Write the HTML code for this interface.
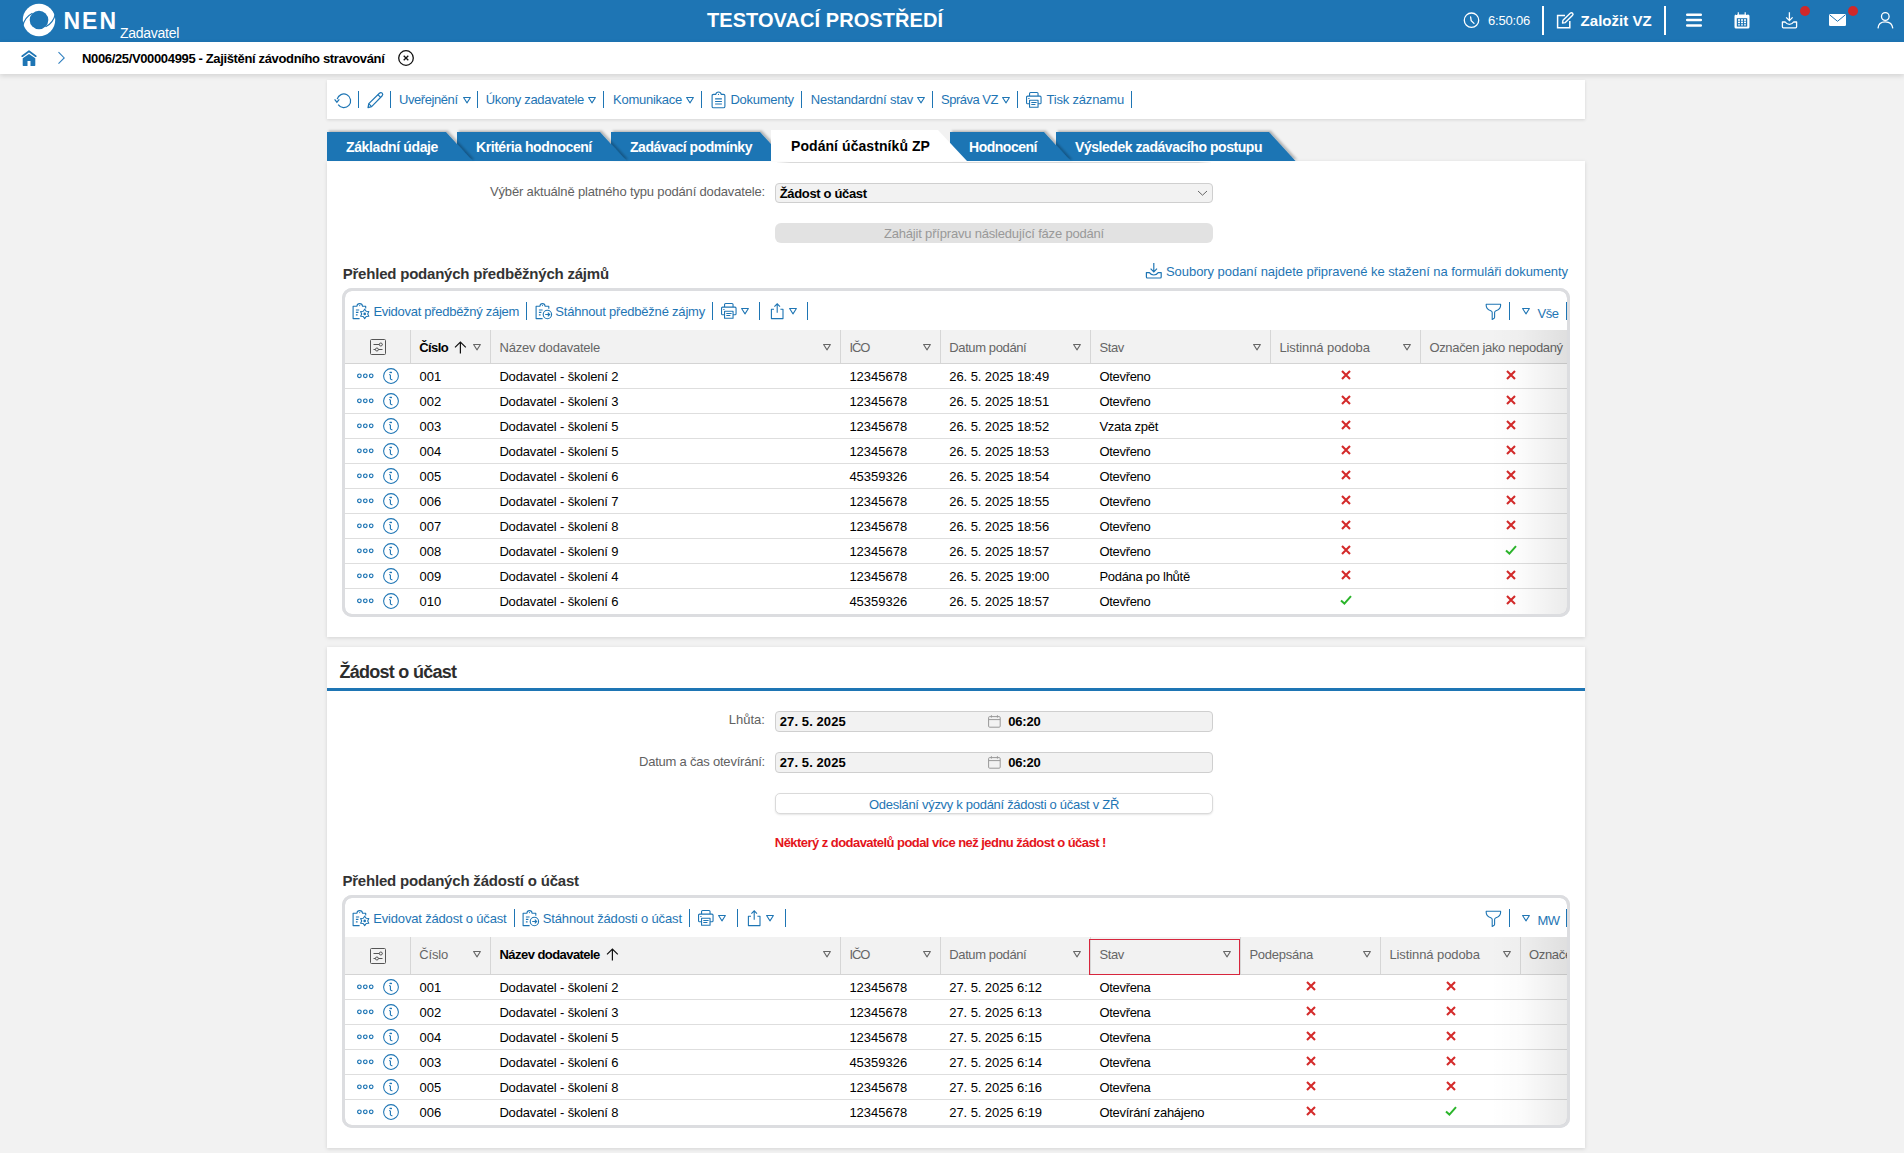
<!DOCTYPE html><html><head><meta charset="utf-8"><style>
html,body{margin:0;padding:0;}
body{width:1904px;height:1153px;overflow:hidden;position:relative;background:#f2f2f2;font-family:"Liberation Sans",sans-serif;}
.a{position:absolute;}
.t{position:absolute;white-space:nowrap;}
svg.a{overflow:visible;}
</style></head><body>
<div class="a" style="left:0px;top:0px;width:1904px;height:42px;background:#1e75b4;"></div>
<svg class="a" style="left:22px;top:3px;" width="34" height="34" viewBox="0 0 34 34">
<circle cx="17" cy="17" r="16.2" fill="#fff"/>
<circle cx="17" cy="17" r="9.3" fill="#1e75b4"/>
<path d="M0.6 23.2 Q2.6 14.2 10.4 10.2" fill="none" stroke="#1e75b4" stroke-width="1.2"/>
<path d="M33.4 10.8 Q31.4 19.8 23.6 23.8" fill="none" stroke="#1e75b4" stroke-width="1.2"/>
<path d="M0.6 23.2 L3.6 26.6 L0 27 Z" fill="#1e75b4"/>
<path d="M33.4 10.8 L30.4 7.4 L34 7 Z" fill="#1e75b4"/>
</svg>
<div class="t" style="letter-spacing:1.979px;left:63.5px;top:9.53px;font-size:23.00px;line-height:23.00px;font-weight:700;color:#fff;">NEN</div>
<div class="t" style="letter-spacing:-0.276px;left:120px;top:25.95px;font-size:14.00px;line-height:14.00px;font-weight:400;color:#fff;">Zadavatel</div>
<div class="t" style="letter-spacing:0.061px;left:707px;top:10.27px;font-size:20.00px;line-height:20.00px;font-weight:700;color:#fff;">TESTOVACÍ PROSTŘEDÍ</div>
<svg class="a" style="left:1463px;top:12px;" width="17" height="17" viewBox="0 0 17 17"><circle cx="8.5" cy="8.2" r="7.2" fill="none" stroke="#fff" stroke-width="1.3"/><path d="M7.6 5 L8.2 8.6 L11 11.4" fill="none" stroke="#fff" stroke-width="1.3" stroke-linecap="round"/></svg>
<div class="t" style="letter-spacing:-0.196px;left:1488px;top:13.70px;font-size:13.00px;line-height:13.00px;font-weight:400;color:#fff;">6:50:06</div>
<div class="a" style="left:1541.8px;top:6px;width:2.4px;height:29px;background:#fff;"></div>
<svg class="a" style="left:1556px;top:12px;" width="18" height="17" viewBox="0 0 18 17"><path d="M9 3.5 H1.6 V15.8 H13.8 V9" fill="none" stroke="#fff" stroke-width="1.5"/><path d="M6.5 11 L7 8.2 L14.2 1.2 Q15.5 0.2 16.6 1.3 Q17.6 2.5 16.4 3.6 L9.3 10.6 Z" fill="none" stroke="#fff" stroke-width="1.4" stroke-linejoin="round"/></svg>
<div class="t" style="letter-spacing:0.016px;left:1580.6px;top:12.90px;font-size:15.00px;line-height:15.00px;font-weight:700;color:#fff;">Založit VZ</div>
<div class="a" style="left:1663.8px;top:6px;width:2.4px;height:29px;background:#fff;"></div>
<svg class="a" style="left:1686px;top:13px;" width="16" height="14" viewBox="0 0 16 14"><path d="M1.2 1.7 H14.8 M1.2 7 H14.8 M1.2 12.4 H14.8" stroke="#fff" stroke-width="2.5" stroke-linecap="round"/></svg>
<svg class="a" style="left:1733px;top:12px;" width="18" height="17" viewBox="0 0 18 17"><rect x="1.5" y="2.4" width="15" height="14" rx="1.5" fill="#fff"/>
<rect x="3.8" y="6.2" width="10.4" height="8.4" fill="#1e75b4"/>
<path d="M5.3 0.3 V3.4 M12.2 0.3 V3.4" stroke="#fff" stroke-width="1.2"/>
<rect x="3" y="0" width="1" height="3" fill="#1e75b4"/><rect x="13.3" y="0" width="1" height="3" fill="#1e75b4"/>
<g fill="#fff"><rect x="5" y="7.2" width="2" height="1.6"/><rect x="8" y="7.2" width="2" height="1.6"/><rect x="11" y="7.2" width="2" height="1.6"/>
<rect x="5" y="9.6" width="2" height="1.6"/><rect x="8" y="9.6" width="2" height="1.6"/><rect x="11" y="9.6" width="2" height="1.6"/>
<rect x="5" y="12" width="2" height="1.6" opacity=".7"/><rect x="8" y="12" width="2" height="1.6" opacity=".7"/><rect x="11" y="12" width="2" height="1.6" opacity=".7"/></g></svg>
<svg class="a" style="left:1781px;top:12px;" width="18" height="17" viewBox="0 0 18 17"><path d="M8.4 0.3 V8.3 M5.2 5.4 L8.4 8.6 L11.6 5.4" fill="none" stroke="#fff" stroke-width="1.3"/>
<path d="M1.4 10 V14.8 Q1.4 15.8 2.4 15.8 H14.6 Q15.6 15.8 15.6 14.8 V10 H12.6 Q11 12.4 8.4 12.4 Q5.8 12.4 4.2 10 Z" fill="none" stroke="#fff" stroke-width="1.3" stroke-linejoin="round"/></svg>
<div class="a" style="left:1800px;top:6px;width:10px;height:10px;border-radius:50%;background:#d0282a;"></div>
<svg class="a" style="left:1829px;top:14px;" width="17" height="12" viewBox="0 0 17 12"><rect x="0" y="0" width="17" height="12" rx="1.2" fill="#fff"/>
<path d="M0.6 0.8 L8.5 7.3 L16.4 0.8" fill="none" stroke="#1e75b4" stroke-width="1"/></svg>
<div class="a" style="left:1848px;top:6px;width:10px;height:10px;border-radius:50%;background:#d0282a;"></div>
<svg class="a" style="left:1877px;top:12px;" width="17" height="17" viewBox="0 0 17 17"><circle cx="8.3" cy="4.5" r="3.8" fill="none" stroke="#fff" stroke-width="1.3"/>
<path d="M1 16.4 Q1.4 9.8 8.3 9.8 Q15.2 9.8 15.8 16.4" fill="none" stroke="#fff" stroke-width="1.3"/></svg>
<div class="a" style="left:0px;top:42px;width:1904px;height:32px;background:#fff;box-shadow:0 2px 5px rgba(0,0,0,0.13);"></div>
<svg class="a" style="left:21px;top:50px;" width="17" height="17" viewBox="0 0 17 17"><path d="M1.2 6.2 L8 1.2 L14.8 6.2" fill="none" stroke="#1e75b4" stroke-width="1.7" stroke-linecap="round" stroke-linejoin="round"/>
<path d="M1.7 8.3 L8 3.9 L14.3 8.3 V15.3 Q14.3 15.9 13.7 15.9 H9.5 V11 H6.5 V15.9 H2.3 Q1.7 15.9 1.7 15.3 Z" fill="#1e75b4"/></svg>
<svg class="a" style="left:57px;top:51px;" width="9" height="14" viewBox="0 0 9 14"><path d="M1.5 1.2 L7.2 6.9 L1.5 12.6" fill="none" stroke="#2f7fbf" stroke-width="1.1"/></svg>
<div class="t" style="letter-spacing:-0.354px;left:82px;top:52.00px;font-size:13.00px;line-height:13.00px;font-weight:700;color:#000;">N006/25/V00004995 - Zajištění závodního stravování</div>
<svg class="a" style="left:397px;top:49px;" width="18" height="18" viewBox="0 0 18 18"><circle cx="9" cy="9" r="7.3" fill="none" stroke="#111" stroke-width="1.3"/><path d="M6.7 6.7 L11.3 11.3 M11.3 6.7 L6.7 11.3" stroke="#111" stroke-width="1.3"/></svg>
<div class="a" style="left:327px;top:80px;width:1258px;height:39px;background:#fff;box-shadow:0 1px 3px rgba(0,0,0,0.12);"></div>
<svg class="a" style="left:334px;top:93.5px;" width="18" height="16" viewBox="0 0 18 16"><path d="M4.2 10.6 A6.8 6.8 0 1 0 3.2 5.2" fill="none" stroke="#1e75b4" stroke-width="1.2"/>
<path d="M0.6 5.3 L2.9 8.2 L5.3 5.4" fill="none" stroke="#1e75b4" stroke-width="1.2"/></svg>
<div class="a" style="left:358px;top:91px;width:1px;height:17px;background:#1e75b4;"></div>
<svg class="a" style="left:366px;top:91px;" width="18" height="18" viewBox="0 0 18 18"><path d="M2 16.6 L2.8 12.6 L13.4 2.2 Q14.9 0.9 16.2 2.2 Q17.4 3.6 16 5 L5.6 15.6 Z" fill="none" stroke="#1e75b4" stroke-width="1.2" stroke-linejoin="round"/>
<path d="M2.8 12.6 L5.6 15.6 M11.9 3.7 L14.6 6.4" fill="none" stroke="#1e75b4" stroke-width="1.2"/></svg>
<div class="a" style="left:390px;top:91px;width:1px;height:17px;background:#1e75b4;"></div>
<div class="t" style="letter-spacing:-0.427px;left:399px;top:92.75px;font-size:13.00px;line-height:13.00px;font-weight:400;color:#1e75b4;">Uveřejnění</div>
<svg class="a" style="left:462.5px;top:97px;" width="8" height="7" viewBox="0 0 8 7"><path d="M0.6 0.5 H7.4 L4 5.9 Z" fill="none" stroke="#1e75b4" stroke-width="1.05" stroke-linejoin="round"/></svg>
<div class="a" style="left:477px;top:91px;width:1px;height:17px;background:#1e75b4;"></div>
<div class="t" style="letter-spacing:-0.315px;left:485.7px;top:92.75px;font-size:13.00px;line-height:13.00px;font-weight:400;color:#1e75b4;">Úkony zadavatele</div>
<svg class="a" style="left:588px;top:97px;" width="8" height="7" viewBox="0 0 8 7"><path d="M0.6 0.5 H7.4 L4 5.9 Z" fill="none" stroke="#1e75b4" stroke-width="1.05" stroke-linejoin="round"/></svg>
<div class="a" style="left:603px;top:91px;width:1px;height:17px;background:#1e75b4;"></div>
<div class="t" style="letter-spacing:-0.255px;left:613px;top:92.75px;font-size:13.00px;line-height:13.00px;font-weight:400;color:#1e75b4;">Komunikace</div>
<svg class="a" style="left:686.2px;top:97px;" width="8" height="7" viewBox="0 0 8 7"><path d="M0.6 0.5 H7.4 L4 5.9 Z" fill="none" stroke="#1e75b4" stroke-width="1.05" stroke-linejoin="round"/></svg>
<div class="a" style="left:701px;top:91px;width:1px;height:17px;background:#1e75b4;"></div>
<svg class="a" style="left:711px;top:91px;" width="15" height="18" viewBox="0 0 15 18"><path d="M4.8 3.4 H2.5 Q1.1 3.4 1.1 4.8 V15.4 Q1.1 16.8 2.5 16.8 H12.5 Q13.9 16.8 13.9 15.4 V4.8 Q13.9 3.4 12.5 3.4 H10.2 Q9.8 1 7.5 1 Q5.2 1 4.8 3.4 Z" fill="none" stroke="#1e75b4" stroke-width="1.1" stroke-linejoin="round"/>
<circle cx="7.5" cy="3.4" r="0.6" fill="#1e75b4"/>
<path d="M4.1 7.9 H10.9 M4.1 10.5 H10.9 M4.1 13 H10.9" stroke="#1e75b4" stroke-width="1.1"/></svg>
<div class="t" style="letter-spacing:-0.278px;left:730.5px;top:92.75px;font-size:13.00px;line-height:13.00px;font-weight:400;color:#1e75b4;">Dokumenty</div>
<div class="a" style="left:801px;top:91px;width:1px;height:17px;background:#1e75b4;"></div>
<div class="t" style="letter-spacing:-0.189px;left:810.7px;top:92.75px;font-size:13.00px;line-height:13.00px;font-weight:400;color:#1e75b4;">Nestandardní stav</div>
<svg class="a" style="left:917px;top:97px;" width="8" height="7" viewBox="0 0 8 7"><path d="M0.6 0.5 H7.4 L4 5.9 Z" fill="none" stroke="#1e75b4" stroke-width="1.05" stroke-linejoin="round"/></svg>
<div class="a" style="left:932px;top:91px;width:1px;height:17px;background:#1e75b4;"></div>
<div class="t" style="letter-spacing:-0.502px;left:941px;top:92.75px;font-size:13.00px;line-height:13.00px;font-weight:400;color:#1e75b4;">Správa VZ</div>
<svg class="a" style="left:1002.2px;top:97px;" width="8" height="7" viewBox="0 0 8 7"><path d="M0.6 0.5 H7.4 L4 5.9 Z" fill="none" stroke="#1e75b4" stroke-width="1.05" stroke-linejoin="round"/></svg>
<div class="a" style="left:1017px;top:91px;width:1px;height:17px;background:#1e75b4;"></div>
<svg class="a" style="left:1026.2px;top:92px;" width="16" height="16" viewBox="0 0 16 16"><path d="M3.55 4.1 V1.6 Q3.55 0.55 4.6 0.55 H11 Q12.05 0.55 12.05 1.6 V4.1" fill="none" stroke="#1e75b4" stroke-width="1.1"/>
<path d="M3.55 11.8 H1.6 Q0.55 11.8 0.55 10.75 V5.15 Q0.55 4.1 1.6 4.1 H14 Q15.05 4.1 15.05 5.15 V10.75 Q15.05 11.8 14 11.8 H12.05" fill="none" stroke="#1e75b4" stroke-width="1.1"/>
<path d="M3.55 15.25 V8.3 H12.05 V15.25 Z" fill="none" stroke="#1e75b4" stroke-width="1.1" stroke-linejoin="round"/>
<path d="M5.3 10.4 H10.6 M5.3 12.5 H9.4 M2.3 6.4 H3.5" stroke="#1e75b4" stroke-width="1.05"/></svg>
<div class="t" style="letter-spacing:-0.177px;left:1046.4px;top:92.75px;font-size:13.00px;line-height:13.00px;font-weight:400;color:#1e75b4;">Tisk záznamu</div>
<div class="a" style="left:1131px;top:91px;width:1px;height:17px;background:#1e75b4;"></div>
<svg class="a" style="left:327px;top:132px;z-index:60;" width="151.5" height="29" viewBox="0 0 151.5 29"><defs><filter id="f60" x="-10%" y="-30%" width="130%" height="160%"><feDropShadow dx="1.8" dy="-1.4" stdDeviation="1.0" flood-color="#000" flood-opacity="0.26"/></filter></defs>
<polygon points="0,0 119,0 145.5,29 0,29" fill="#1e75b4" filter="url(#f60)"/></svg>
<div class="t" style="letter-spacing:-0.375px;left:346px;top:139.65px;font-size:14.00px;line-height:14.00px;font-weight:700;color:#fff;z-index:61;">Základní údaje</div>
<svg class="a" style="left:457px;top:132px;z-index:50;" width="175.5" height="29" viewBox="0 0 175.5 29"><defs><filter id="f50" x="-10%" y="-30%" width="130%" height="160%"><feDropShadow dx="1.8" dy="-1.4" stdDeviation="1.0" flood-color="#000" flood-opacity="0.26"/></filter></defs>
<polygon points="0,0 143,0 169.5,29 0,29" fill="#1e75b4" filter="url(#f50)"/></svg>
<div class="t" style="letter-spacing:-0.438px;left:476px;top:139.65px;font-size:14.00px;line-height:14.00px;font-weight:700;color:#fff;z-index:51;">Kritéria hodnocení</div>
<svg class="a" style="left:611px;top:132px;z-index:40;" width="181.5" height="29" viewBox="0 0 181.5 29"><defs><filter id="f40" x="-10%" y="-30%" width="130%" height="160%"><feDropShadow dx="1.8" dy="-1.4" stdDeviation="1.0" flood-color="#000" flood-opacity="0.26"/></filter></defs>
<polygon points="0,0 149,0 175.5,29 0,29" fill="#1e75b4" filter="url(#f40)"/></svg>
<div class="t" style="letter-spacing:-0.467px;left:630px;top:139.65px;font-size:14.00px;line-height:14.00px;font-weight:700;color:#fff;z-index:41;">Zadávací podmínky</div>
<svg class="a" style="left:771px;top:130px;z-index:70;" width="200" height="31" viewBox="0 0 200 31"><polygon points="0,0 167,0 196,31 0,31" fill="#fff"/></svg>
<div class="t" style="letter-spacing:0.068px;left:791px;top:138.95px;font-size:14.00px;line-height:14.00px;font-weight:700;color:#000;z-index:71;">Podání účastníků ZP</div>
<svg class="a" style="left:950px;top:132px;z-index:30;" width="126.5" height="29" viewBox="0 0 126.5 29"><defs><filter id="f30" x="-10%" y="-30%" width="130%" height="160%"><feDropShadow dx="1.8" dy="-1.4" stdDeviation="1.0" flood-color="#000" flood-opacity="0.26"/></filter></defs>
<polygon points="0,0 94,0 120.5,29 0,29" fill="#1e75b4" filter="url(#f30)"/></svg>
<div class="t" style="letter-spacing:-0.483px;left:969px;top:139.65px;font-size:14.00px;line-height:14.00px;font-weight:700;color:#fff;z-index:31;">Hodnocení</div>
<svg class="a" style="left:1056px;top:132px;z-index:20;" width="245.5" height="29" viewBox="0 0 245.5 29"><defs><filter id="f20" x="-10%" y="-30%" width="130%" height="160%"><feDropShadow dx="1.8" dy="-1.4" stdDeviation="1.0" flood-color="#000" flood-opacity="0.26"/></filter></defs>
<polygon points="0,0 213,0 239.5,29 0,29" fill="#1e75b4" filter="url(#f20)"/></svg>
<div class="t" style="letter-spacing:-0.451px;left:1075px;top:139.65px;font-size:14.00px;line-height:14.00px;font-weight:700;color:#fff;z-index:21;">Výsledek zadávacího postupu</div>
<div class="a" style="left:327px;top:161px;width:1258px;height:476px;background:#fff;box-shadow:0 1px 4px rgba(0,0,0,0.13);"></div>
<div class="a" style="left:777px;top:162px;width:434px;height:1px;background:linear-gradient(to right,rgba(0,0,0,0.02),rgba(0,0,0,0.15) 3%,rgba(0,0,0,0.15) 97%,rgba(0,0,0,0.02));"></div>
<div class="t" style="letter-spacing:-0.162px;right:1139px;top:185.40px;font-size:13.00px;line-height:13.00px;font-weight:400;color:#616161;">Výběr aktuálně platného typu podání dodavatele:</div>
<div class="a" style="left:775px;top:183px;width:438px;height:20px;background:#f2f2f2;border:1px solid #cfcfcf;border-radius:4px;box-sizing:border-box;"></div>
<div class="t" style="letter-spacing:-0.339px;left:779.7px;top:186.60px;font-size:13.00px;line-height:13.00px;font-weight:700;color:#000;">Žádost o účast</div>
<svg class="a" style="left:1197px;top:190px;" width="11" height="7" viewBox="0 0 11 7"><path d="M1 1 L5.5 5.2 L10 1" fill="none" stroke="#666" stroke-width="1"/></svg>
<div class="a" style="left:775px;top:223px;width:438px;height:20px;background:#e2e2e2;border-radius:6px;"></div>
<div class="t" style="letter-spacing:-0.191px;left:994px;transform:translateX(-50%);top:227.20px;font-size:13.00px;line-height:13.00px;font-weight:400;color:#999;">Zahájit přípravu následující fáze podání</div>
<div class="t" style="letter-spacing:-0.212px;left:342.7px;top:265.70px;font-size:15.00px;line-height:15.00px;font-weight:700;color:#333;">Přehled podaných předběžných zájmů</div>
<svg class="a" style="left:1145px;top:262px;" width="18" height="17" viewBox="0 0 18 17"><path d="M8.8 1 V9.6 M5.6 6.6 L8.8 9.8 L12 6.6" fill="none" stroke="#1e75b4" stroke-width="1.2"/>
<path d="M1.4 10.6 V15 Q1.4 16 2.4 16 H15.2 Q16.2 16 16.2 15 V10.6 H13.2 Q11.6 13 8.8 13 Q6 13 4.4 10.6 Z" fill="none" stroke="#1e75b4" stroke-width="1.2" stroke-linejoin="round"/></svg>
<div class="t" style="letter-spacing:-0.051px;left:1166px;top:265.20px;font-size:13.00px;line-height:13.00px;font-weight:400;color:#1e75b4;">Soubory podaní najdete připravené ke stažení na formuláři dokumenty</div>
<div class="a" style="left:342px;top:288px;width:1228px;height:329px;border:3px solid #dcdde0;border-radius:10px;box-sizing:border-box;background:#fff;"></div>
<div class="a" style="left:0;top:0;width:1567px;height:1153px;overflow:hidden;">
<svg class="a" style="left:352px;top:303px;" width="18" height="17" viewBox="0 0 18 17"><path d="M7.6 15.6 H1.1 V3.2 H4.9 Q5.1 0.6 7.7 0.6 Q10.3 0.6 10.5 3.2 H13.7 V5.6" fill="none" stroke="#1e75b4" stroke-width="1.1" stroke-linejoin="round"/>
<path d="M3.9 7 H7.2 M3.9 9.4 H6.4 M3.9 11.9 H5.6" stroke="#1e75b4" stroke-width="1.2"/>
<circle cx="7.7" cy="2.6" r="0.6" fill="#1e75b4"/>
<polygon points="12.70,6.20 11.20,8.30 8.63,8.55 9.70,10.90 8.63,13.25 11.20,13.50 12.70,15.60 14.20,13.50 16.77,13.25 15.70,10.90 16.77,8.55 14.20,8.30" fill="#fff" stroke="#1e75b4" stroke-width="1.1" stroke-linejoin="round"/>
<circle cx="12.7" cy="10.9" r="1.3" fill="#1e75b4"/></svg>
<div class="t" style="letter-spacing:-0.283px;left:373.4px;top:305.00px;font-size:13.00px;line-height:13.00px;font-weight:400;color:#1e75b4;">Evidovat předběžný zájem</div>
<div class="a" style="left:526px;top:302px;width:1px;height:17.5px;background:#1e75b4;"></div>
<svg class="a" style="left:534.5px;top:303px;" width="18" height="17" viewBox="0 0 18 17"><path d="M7.6 15.6 H1.1 V3.2 H4.9 Q5.1 0.6 7.5 0.6 Q9.9 0.6 10.1 3.2 H13.8 V5.8" fill="none" stroke="#1e75b4" stroke-width="1.1" stroke-linejoin="round"/>
<path d="M3.9 7 H7.6 M3.9 9.4 H6.4 M3.9 11.9 H5.6" stroke="#1e75b4" stroke-width="1.2"/>
<circle cx="7.5" cy="2.6" r="0.6" fill="#1e75b4"/>
<circle cx="12.4" cy="11.5" r="4.2" fill="#fff" stroke="#1e75b4" stroke-width="1.1"/>
<path d="M10.2 11.5 H14.6 M12.8 9.7 L14.7 11.5 L12.8 13.3" fill="none" stroke="#1e75b4" stroke-width="1.1"/></svg>
<div class="t" style="letter-spacing:-0.207px;left:555.3px;top:305.00px;font-size:13.00px;line-height:13.00px;font-weight:400;color:#1e75b4;">Stáhnout předběžné zájmy</div>
<div class="a" style="left:712px;top:302px;width:1px;height:17.5px;background:#1e75b4;"></div>
<svg class="a" style="left:721.2px;top:303.1px;" width="16" height="16" viewBox="0 0 16 16"><path d="M3.55 4.1 V1.6 Q3.55 0.55 4.6 0.55 H11 Q12.05 0.55 12.05 1.6 V4.1" fill="none" stroke="#1e75b4" stroke-width="1.1"/>
<path d="M3.55 11.8 H1.6 Q0.55 11.8 0.55 10.75 V5.15 Q0.55 4.1 1.6 4.1 H14 Q15.05 4.1 15.05 5.15 V10.75 Q15.05 11.8 14 11.8 H12.05" fill="none" stroke="#1e75b4" stroke-width="1.1"/>
<path d="M3.55 15.25 V8.3 H12.05 V15.25 Z" fill="none" stroke="#1e75b4" stroke-width="1.1" stroke-linejoin="round"/>
<path d="M5.3 10.4 H10.6 M5.3 12.5 H9.4 M2.3 6.4 H3.5" stroke="#1e75b4" stroke-width="1.05"/></svg>
<svg class="a" style="left:741.4px;top:308px;" width="8" height="7" viewBox="0 0 8 7"><path d="M0.6 0.5 H7.4 L4 5.9 Z" fill="none" stroke="#1e75b4" stroke-width="1.05" stroke-linejoin="round"/></svg>
<div class="a" style="left:759px;top:302px;width:1px;height:17.5px;background:#1e75b4;"></div>
<svg class="a" style="left:769.8px;top:303px;" width="15" height="17" viewBox="0 0 15 17"><path d="M4 6.2 H1.4 V15.6 H13 V6.2 H10.4" fill="none" stroke="#1e75b4" stroke-width="1.1" stroke-linejoin="round"/>
<path d="M7.2 0.8 V9.8 M4.4 3.6 L7.2 0.8 L10 3.6" fill="none" stroke="#1e75b4" stroke-width="1.1"/></svg>
<svg class="a" style="left:788.5px;top:308px;" width="8" height="7" viewBox="0 0 8 7"><path d="M0.6 0.5 H7.4 L4 5.9 Z" fill="none" stroke="#1e75b4" stroke-width="1.05" stroke-linejoin="round"/></svg>
<div class="a" style="left:807px;top:302px;width:1px;height:17.5px;background:#1e75b4;"></div>
<svg class="a" style="left:1485px;top:303px;" width="17" height="17" viewBox="0 0 17 17"><path d="M1.2 1.2 H15.6 V2.4 Q15.6 6 11 7.8 Q9.6 8.4 9.6 9.6 V14.2 Q9.6 15 8.8 15.6 L7.2 16.4 V9.6 Q7.2 8.4 5.8 7.8 Q1.2 6 1.2 2.4 Z" fill="none" stroke="#1e75b4" stroke-width="1.1" stroke-linejoin="round"/></svg>
<div class="a" style="left:1509px;top:302px;width:1px;height:17.5px;background:#1e75b4;"></div>
<svg class="a" style="left:1521.8px;top:308px;" width="8" height="7" viewBox="0 0 8 7"><path d="M0.6 0.5 H7.4 L4 5.9 Z" fill="none" stroke="#1e75b4" stroke-width="1.05" stroke-linejoin="round"/></svg>
<div class="t" style="letter-spacing:-0.469px;left:1537.5px;top:307.00px;font-size:13.00px;line-height:13.00px;font-weight:400;color:#1e75b4;">Vše</div>
<div class="a" style="left:1566px;top:302px;width:1px;height:17.5px;background:#1e75b4;"></div>
<div class="a" style="left:345px;top:330px;width:1222px;height:33px;background:#f2f2f2;"></div>
<div class="a" style="left:345px;top:363px;width:1222px;height:1px;background:#d4d4d4;"></div>
<svg class="a" style="left:370px;top:339px;" width="17" height="17" viewBox="0 0 17 17"><rect x="0.5" y="0.5" width="15" height="15" rx="1" fill="none" stroke="#555" stroke-width="1"/>
<path d="M3.5 5.5 H12.5 M3.5 10.5 H12.5" stroke="#555" stroke-width="1"/>
<circle cx="10.8" cy="5.5" r="1.5" fill="#f2f2f2" stroke="#555" stroke-width="1"/>
<circle cx="6.9" cy="10.5" r="1.5" fill="#f2f2f2" stroke="#555" stroke-width="1"/></svg>
<div class="a" style="left:410px;top:330px;width:1px;height:33px;background:#d6d6d6;"></div>
<div class="a" style="left:490px;top:330px;width:1px;height:33px;background:#d6d6d6;"></div>
<div class="a" style="left:840px;top:330px;width:1px;height:33px;background:#d6d6d6;"></div>
<div class="a" style="left:940px;top:330px;width:1px;height:33px;background:#d6d6d6;"></div>
<div class="a" style="left:1090px;top:330px;width:1px;height:33px;background:#d6d6d6;"></div>
<div class="a" style="left:1270px;top:330px;width:1px;height:33px;background:#d6d6d6;"></div>
<div class="a" style="left:1420px;top:330px;width:1px;height:33px;background:#d6d6d6;"></div>
<div class="t" style="letter-spacing:-0.619px;left:419.3px;top:340.80px;font-size:13.00px;line-height:13.00px;font-weight:700;color:#000;">Číslo</div>
<svg class="a" style="left:453.5px;top:341px;" width="13" height="13" viewBox="0 0 13 13"><path d="M6.4 12.4 V1.2 M1 6.4 L6.4 1 L11.8 6.4" fill="none" stroke="#111" stroke-width="1.2"/></svg>
<svg class="a" style="left:473.2px;top:344px;" width="8" height="7" viewBox="0 0 8 7"><path d="M0.6 0.5 H7.4 L4 5.9 Z" fill="none" stroke="#666" stroke-width="1.05" stroke-linejoin="round"/></svg>
<div class="t" style="letter-spacing:-0.224px;left:499.5px;top:340.80px;font-size:13.00px;line-height:13.00px;font-weight:400;color:#666;">Název dodavatele</div>
<svg class="a" style="left:823.3px;top:344px;" width="8" height="7" viewBox="0 0 8 7"><path d="M0.6 0.5 H7.4 L4 5.9 Z" fill="none" stroke="#666" stroke-width="1.05" stroke-linejoin="round"/></svg>
<div class="t" style="letter-spacing:-1.042px;left:849.4px;top:340.80px;font-size:13.00px;line-height:13.00px;font-weight:400;color:#666;">IČO</div>
<svg class="a" style="left:923.4px;top:344px;" width="8" height="7" viewBox="0 0 8 7"><path d="M0.6 0.5 H7.4 L4 5.9 Z" fill="none" stroke="#666" stroke-width="1.05" stroke-linejoin="round"/></svg>
<div class="t" style="letter-spacing:-0.389px;left:949.3px;top:340.80px;font-size:13.00px;line-height:13.00px;font-weight:400;color:#666;">Datum podání</div>
<svg class="a" style="left:1073.4px;top:344px;" width="8" height="7" viewBox="0 0 8 7"><path d="M0.6 0.5 H7.4 L4 5.9 Z" fill="none" stroke="#666" stroke-width="1.05" stroke-linejoin="round"/></svg>
<div class="t" style="letter-spacing:-0.379px;left:1099.4px;top:340.80px;font-size:13.00px;line-height:13.00px;font-weight:400;color:#666;">Stav</div>
<svg class="a" style="left:1253.4px;top:344px;" width="8" height="7" viewBox="0 0 8 7"><path d="M0.6 0.5 H7.4 L4 5.9 Z" fill="none" stroke="#666" stroke-width="1.05" stroke-linejoin="round"/></svg>
<div class="t" style="letter-spacing:-0.087px;left:1279.4px;top:340.80px;font-size:13.00px;line-height:13.00px;font-weight:400;color:#666;">Listinná podoba</div>
<svg class="a" style="left:1403.2px;top:344px;" width="8" height="7" viewBox="0 0 8 7"><path d="M0.6 0.5 H7.4 L4 5.9 Z" fill="none" stroke="#666" stroke-width="1.05" stroke-linejoin="round"/></svg>
<div class="t" style="letter-spacing:-0.325px;left:1429.4px;top:340.80px;font-size:13.00px;line-height:13.00px;font-weight:400;color:#666;">Označen jako nepodaný</div>
<svg class="a" style="left:356.5px;top:373.2px;" width="17" height="6" viewBox="0 0 17 6"><g fill="none" stroke="#1e75b4" stroke-width="1.2"><circle cx="2.4" cy="2.8" r="1.8"/><circle cx="8.3" cy="2.8" r="1.8"/><circle cx="14.2" cy="2.8" r="1.8"/></g></svg>
<svg class="a" style="left:383px;top:368px;" width="17" height="17" viewBox="0 0 17 17"><circle cx="8" cy="8" r="7.4" fill="none" stroke="#1e75b4" stroke-width="1.05"/>
<path d="M6.6 6.6 L7.4 7.2 V10.6 Q7.6 11.6 9 11.8" fill="none" stroke="#1e75b4" stroke-width="1.1" stroke-linecap="round" stroke-linejoin="round"/>
<path d="M7 4.3 L8.4 4.5" stroke="#1e75b4" stroke-width="1.3" stroke-linecap="round"/></svg>
<div class="t" style="letter-spacing:0.000px;left:419.5px;top:369.80px;font-size:13.00px;line-height:13.00px;font-weight:400;color:#000;">001</div>
<div class="t" style="letter-spacing:-0.154px;left:499.4px;top:369.80px;font-size:13.00px;line-height:13.00px;font-weight:400;color:#000;">Dodavatel - školení 2</div>
<div class="t" style="letter-spacing:-0.005px;left:849.4px;top:369.80px;font-size:13.00px;line-height:13.00px;font-weight:400;color:#000;">12345678</div>
<div class="t" style="letter-spacing:-0.083px;left:949.3px;top:369.80px;font-size:13.00px;line-height:13.00px;font-weight:400;color:#000;">26. 5. 2025 18:49</div>
<div class="t" style="letter-spacing:-0.301px;left:1099.4px;top:369.80px;font-size:13.00px;line-height:13.00px;font-weight:400;color:#000;">Otevřeno</div>
<svg class="a" style="left:1340.5px;top:369.5px;" width="10" height="10" viewBox="0 0 10 10"><path d="M1 1 L9 9 M9 1 L1 9" stroke="#d42a2a" stroke-width="2.1"/></svg>
<svg class="a" style="left:1506.3px;top:369.5px;" width="10" height="10" viewBox="0 0 10 10"><path d="M1 1 L9 9 M9 1 L1 9" stroke="#d42a2a" stroke-width="2.1"/></svg>
<div class="a" style="left:345px;top:388px;width:1222px;height:1px;background:#dedede;"></div>
<svg class="a" style="left:356.5px;top:398.2px;" width="17" height="6" viewBox="0 0 17 6"><g fill="none" stroke="#1e75b4" stroke-width="1.2"><circle cx="2.4" cy="2.8" r="1.8"/><circle cx="8.3" cy="2.8" r="1.8"/><circle cx="14.2" cy="2.8" r="1.8"/></g></svg>
<svg class="a" style="left:383px;top:393px;" width="17" height="17" viewBox="0 0 17 17"><circle cx="8" cy="8" r="7.4" fill="none" stroke="#1e75b4" stroke-width="1.05"/>
<path d="M6.6 6.6 L7.4 7.2 V10.6 Q7.6 11.6 9 11.8" fill="none" stroke="#1e75b4" stroke-width="1.1" stroke-linecap="round" stroke-linejoin="round"/>
<path d="M7 4.3 L8.4 4.5" stroke="#1e75b4" stroke-width="1.3" stroke-linecap="round"/></svg>
<div class="t" style="letter-spacing:0.000px;left:419.5px;top:394.80px;font-size:13.00px;line-height:13.00px;font-weight:400;color:#000;">002</div>
<div class="t" style="letter-spacing:-0.154px;left:499.4px;top:394.80px;font-size:13.00px;line-height:13.00px;font-weight:400;color:#000;">Dodavatel - školení 3</div>
<div class="t" style="letter-spacing:-0.005px;left:849.4px;top:394.80px;font-size:13.00px;line-height:13.00px;font-weight:400;color:#000;">12345678</div>
<div class="t" style="letter-spacing:-0.083px;left:949.3px;top:394.80px;font-size:13.00px;line-height:13.00px;font-weight:400;color:#000;">26. 5. 2025 18:51</div>
<div class="t" style="letter-spacing:-0.301px;left:1099.4px;top:394.80px;font-size:13.00px;line-height:13.00px;font-weight:400;color:#000;">Otevřeno</div>
<svg class="a" style="left:1340.5px;top:394.5px;" width="10" height="10" viewBox="0 0 10 10"><path d="M1 1 L9 9 M9 1 L1 9" stroke="#d42a2a" stroke-width="2.1"/></svg>
<svg class="a" style="left:1506.3px;top:394.5px;" width="10" height="10" viewBox="0 0 10 10"><path d="M1 1 L9 9 M9 1 L1 9" stroke="#d42a2a" stroke-width="2.1"/></svg>
<div class="a" style="left:345px;top:413px;width:1222px;height:1px;background:#dedede;"></div>
<svg class="a" style="left:356.5px;top:423.2px;" width="17" height="6" viewBox="0 0 17 6"><g fill="none" stroke="#1e75b4" stroke-width="1.2"><circle cx="2.4" cy="2.8" r="1.8"/><circle cx="8.3" cy="2.8" r="1.8"/><circle cx="14.2" cy="2.8" r="1.8"/></g></svg>
<svg class="a" style="left:383px;top:418px;" width="17" height="17" viewBox="0 0 17 17"><circle cx="8" cy="8" r="7.4" fill="none" stroke="#1e75b4" stroke-width="1.05"/>
<path d="M6.6 6.6 L7.4 7.2 V10.6 Q7.6 11.6 9 11.8" fill="none" stroke="#1e75b4" stroke-width="1.1" stroke-linecap="round" stroke-linejoin="round"/>
<path d="M7 4.3 L8.4 4.5" stroke="#1e75b4" stroke-width="1.3" stroke-linecap="round"/></svg>
<div class="t" style="letter-spacing:0.000px;left:419.5px;top:419.80px;font-size:13.00px;line-height:13.00px;font-weight:400;color:#000;">003</div>
<div class="t" style="letter-spacing:-0.154px;left:499.4px;top:419.80px;font-size:13.00px;line-height:13.00px;font-weight:400;color:#000;">Dodavatel - školení 5</div>
<div class="t" style="letter-spacing:-0.005px;left:849.4px;top:419.80px;font-size:13.00px;line-height:13.00px;font-weight:400;color:#000;">12345678</div>
<div class="t" style="letter-spacing:-0.083px;left:949.3px;top:419.80px;font-size:13.00px;line-height:13.00px;font-weight:400;color:#000;">26. 5. 2025 18:52</div>
<div class="t" style="letter-spacing:-0.276px;left:1099.4px;top:419.80px;font-size:13.00px;line-height:13.00px;font-weight:400;color:#000;">Vzata zpět</div>
<svg class="a" style="left:1340.5px;top:419.5px;" width="10" height="10" viewBox="0 0 10 10"><path d="M1 1 L9 9 M9 1 L1 9" stroke="#d42a2a" stroke-width="2.1"/></svg>
<svg class="a" style="left:1506.3px;top:419.5px;" width="10" height="10" viewBox="0 0 10 10"><path d="M1 1 L9 9 M9 1 L1 9" stroke="#d42a2a" stroke-width="2.1"/></svg>
<div class="a" style="left:345px;top:438px;width:1222px;height:1px;background:#dedede;"></div>
<svg class="a" style="left:356.5px;top:448.2px;" width="17" height="6" viewBox="0 0 17 6"><g fill="none" stroke="#1e75b4" stroke-width="1.2"><circle cx="2.4" cy="2.8" r="1.8"/><circle cx="8.3" cy="2.8" r="1.8"/><circle cx="14.2" cy="2.8" r="1.8"/></g></svg>
<svg class="a" style="left:383px;top:443px;" width="17" height="17" viewBox="0 0 17 17"><circle cx="8" cy="8" r="7.4" fill="none" stroke="#1e75b4" stroke-width="1.05"/>
<path d="M6.6 6.6 L7.4 7.2 V10.6 Q7.6 11.6 9 11.8" fill="none" stroke="#1e75b4" stroke-width="1.1" stroke-linecap="round" stroke-linejoin="round"/>
<path d="M7 4.3 L8.4 4.5" stroke="#1e75b4" stroke-width="1.3" stroke-linecap="round"/></svg>
<div class="t" style="letter-spacing:0.000px;left:419.5px;top:444.80px;font-size:13.00px;line-height:13.00px;font-weight:400;color:#000;">004</div>
<div class="t" style="letter-spacing:-0.154px;left:499.4px;top:444.80px;font-size:13.00px;line-height:13.00px;font-weight:400;color:#000;">Dodavatel - školení 5</div>
<div class="t" style="letter-spacing:-0.005px;left:849.4px;top:444.80px;font-size:13.00px;line-height:13.00px;font-weight:400;color:#000;">12345678</div>
<div class="t" style="letter-spacing:-0.083px;left:949.3px;top:444.80px;font-size:13.00px;line-height:13.00px;font-weight:400;color:#000;">26. 5. 2025 18:53</div>
<div class="t" style="letter-spacing:-0.301px;left:1099.4px;top:444.80px;font-size:13.00px;line-height:13.00px;font-weight:400;color:#000;">Otevřeno</div>
<svg class="a" style="left:1340.5px;top:444.5px;" width="10" height="10" viewBox="0 0 10 10"><path d="M1 1 L9 9 M9 1 L1 9" stroke="#d42a2a" stroke-width="2.1"/></svg>
<svg class="a" style="left:1506.3px;top:444.5px;" width="10" height="10" viewBox="0 0 10 10"><path d="M1 1 L9 9 M9 1 L1 9" stroke="#d42a2a" stroke-width="2.1"/></svg>
<div class="a" style="left:345px;top:463px;width:1222px;height:1px;background:#dedede;"></div>
<svg class="a" style="left:356.5px;top:473.2px;" width="17" height="6" viewBox="0 0 17 6"><g fill="none" stroke="#1e75b4" stroke-width="1.2"><circle cx="2.4" cy="2.8" r="1.8"/><circle cx="8.3" cy="2.8" r="1.8"/><circle cx="14.2" cy="2.8" r="1.8"/></g></svg>
<svg class="a" style="left:383px;top:468px;" width="17" height="17" viewBox="0 0 17 17"><circle cx="8" cy="8" r="7.4" fill="none" stroke="#1e75b4" stroke-width="1.05"/>
<path d="M6.6 6.6 L7.4 7.2 V10.6 Q7.6 11.6 9 11.8" fill="none" stroke="#1e75b4" stroke-width="1.1" stroke-linecap="round" stroke-linejoin="round"/>
<path d="M7 4.3 L8.4 4.5" stroke="#1e75b4" stroke-width="1.3" stroke-linecap="round"/></svg>
<div class="t" style="letter-spacing:0.000px;left:419.5px;top:469.80px;font-size:13.00px;line-height:13.00px;font-weight:400;color:#000;">005</div>
<div class="t" style="letter-spacing:-0.154px;left:499.4px;top:469.80px;font-size:13.00px;line-height:13.00px;font-weight:400;color:#000;">Dodavatel - školení 6</div>
<div class="t" style="letter-spacing:-0.005px;left:849.4px;top:469.80px;font-size:13.00px;line-height:13.00px;font-weight:400;color:#000;">45359326</div>
<div class="t" style="letter-spacing:-0.083px;left:949.3px;top:469.80px;font-size:13.00px;line-height:13.00px;font-weight:400;color:#000;">26. 5. 2025 18:54</div>
<div class="t" style="letter-spacing:-0.301px;left:1099.4px;top:469.80px;font-size:13.00px;line-height:13.00px;font-weight:400;color:#000;">Otevřeno</div>
<svg class="a" style="left:1340.5px;top:469.5px;" width="10" height="10" viewBox="0 0 10 10"><path d="M1 1 L9 9 M9 1 L1 9" stroke="#d42a2a" stroke-width="2.1"/></svg>
<svg class="a" style="left:1506.3px;top:469.5px;" width="10" height="10" viewBox="0 0 10 10"><path d="M1 1 L9 9 M9 1 L1 9" stroke="#d42a2a" stroke-width="2.1"/></svg>
<div class="a" style="left:345px;top:488px;width:1222px;height:1px;background:#dedede;"></div>
<svg class="a" style="left:356.5px;top:498.2px;" width="17" height="6" viewBox="0 0 17 6"><g fill="none" stroke="#1e75b4" stroke-width="1.2"><circle cx="2.4" cy="2.8" r="1.8"/><circle cx="8.3" cy="2.8" r="1.8"/><circle cx="14.2" cy="2.8" r="1.8"/></g></svg>
<svg class="a" style="left:383px;top:493px;" width="17" height="17" viewBox="0 0 17 17"><circle cx="8" cy="8" r="7.4" fill="none" stroke="#1e75b4" stroke-width="1.05"/>
<path d="M6.6 6.6 L7.4 7.2 V10.6 Q7.6 11.6 9 11.8" fill="none" stroke="#1e75b4" stroke-width="1.1" stroke-linecap="round" stroke-linejoin="round"/>
<path d="M7 4.3 L8.4 4.5" stroke="#1e75b4" stroke-width="1.3" stroke-linecap="round"/></svg>
<div class="t" style="letter-spacing:0.000px;left:419.5px;top:494.80px;font-size:13.00px;line-height:13.00px;font-weight:400;color:#000;">006</div>
<div class="t" style="letter-spacing:-0.154px;left:499.4px;top:494.80px;font-size:13.00px;line-height:13.00px;font-weight:400;color:#000;">Dodavatel - školení 7</div>
<div class="t" style="letter-spacing:-0.005px;left:849.4px;top:494.80px;font-size:13.00px;line-height:13.00px;font-weight:400;color:#000;">12345678</div>
<div class="t" style="letter-spacing:-0.083px;left:949.3px;top:494.80px;font-size:13.00px;line-height:13.00px;font-weight:400;color:#000;">26. 5. 2025 18:55</div>
<div class="t" style="letter-spacing:-0.301px;left:1099.4px;top:494.80px;font-size:13.00px;line-height:13.00px;font-weight:400;color:#000;">Otevřeno</div>
<svg class="a" style="left:1340.5px;top:494.5px;" width="10" height="10" viewBox="0 0 10 10"><path d="M1 1 L9 9 M9 1 L1 9" stroke="#d42a2a" stroke-width="2.1"/></svg>
<svg class="a" style="left:1506.3px;top:494.5px;" width="10" height="10" viewBox="0 0 10 10"><path d="M1 1 L9 9 M9 1 L1 9" stroke="#d42a2a" stroke-width="2.1"/></svg>
<div class="a" style="left:345px;top:513px;width:1222px;height:1px;background:#dedede;"></div>
<svg class="a" style="left:356.5px;top:523.2px;" width="17" height="6" viewBox="0 0 17 6"><g fill="none" stroke="#1e75b4" stroke-width="1.2"><circle cx="2.4" cy="2.8" r="1.8"/><circle cx="8.3" cy="2.8" r="1.8"/><circle cx="14.2" cy="2.8" r="1.8"/></g></svg>
<svg class="a" style="left:383px;top:518px;" width="17" height="17" viewBox="0 0 17 17"><circle cx="8" cy="8" r="7.4" fill="none" stroke="#1e75b4" stroke-width="1.05"/>
<path d="M6.6 6.6 L7.4 7.2 V10.6 Q7.6 11.6 9 11.8" fill="none" stroke="#1e75b4" stroke-width="1.1" stroke-linecap="round" stroke-linejoin="round"/>
<path d="M7 4.3 L8.4 4.5" stroke="#1e75b4" stroke-width="1.3" stroke-linecap="round"/></svg>
<div class="t" style="letter-spacing:0.000px;left:419.5px;top:519.80px;font-size:13.00px;line-height:13.00px;font-weight:400;color:#000;">007</div>
<div class="t" style="letter-spacing:-0.154px;left:499.4px;top:519.80px;font-size:13.00px;line-height:13.00px;font-weight:400;color:#000;">Dodavatel - školení 8</div>
<div class="t" style="letter-spacing:-0.005px;left:849.4px;top:519.80px;font-size:13.00px;line-height:13.00px;font-weight:400;color:#000;">12345678</div>
<div class="t" style="letter-spacing:-0.083px;left:949.3px;top:519.80px;font-size:13.00px;line-height:13.00px;font-weight:400;color:#000;">26. 5. 2025 18:56</div>
<div class="t" style="letter-spacing:-0.301px;left:1099.4px;top:519.80px;font-size:13.00px;line-height:13.00px;font-weight:400;color:#000;">Otevřeno</div>
<svg class="a" style="left:1340.5px;top:519.5px;" width="10" height="10" viewBox="0 0 10 10"><path d="M1 1 L9 9 M9 1 L1 9" stroke="#d42a2a" stroke-width="2.1"/></svg>
<svg class="a" style="left:1506.3px;top:519.5px;" width="10" height="10" viewBox="0 0 10 10"><path d="M1 1 L9 9 M9 1 L1 9" stroke="#d42a2a" stroke-width="2.1"/></svg>
<div class="a" style="left:345px;top:538px;width:1222px;height:1px;background:#dedede;"></div>
<svg class="a" style="left:356.5px;top:548.2px;" width="17" height="6" viewBox="0 0 17 6"><g fill="none" stroke="#1e75b4" stroke-width="1.2"><circle cx="2.4" cy="2.8" r="1.8"/><circle cx="8.3" cy="2.8" r="1.8"/><circle cx="14.2" cy="2.8" r="1.8"/></g></svg>
<svg class="a" style="left:383px;top:543px;" width="17" height="17" viewBox="0 0 17 17"><circle cx="8" cy="8" r="7.4" fill="none" stroke="#1e75b4" stroke-width="1.05"/>
<path d="M6.6 6.6 L7.4 7.2 V10.6 Q7.6 11.6 9 11.8" fill="none" stroke="#1e75b4" stroke-width="1.1" stroke-linecap="round" stroke-linejoin="round"/>
<path d="M7 4.3 L8.4 4.5" stroke="#1e75b4" stroke-width="1.3" stroke-linecap="round"/></svg>
<div class="t" style="letter-spacing:0.000px;left:419.5px;top:544.80px;font-size:13.00px;line-height:13.00px;font-weight:400;color:#000;">008</div>
<div class="t" style="letter-spacing:-0.154px;left:499.4px;top:544.80px;font-size:13.00px;line-height:13.00px;font-weight:400;color:#000;">Dodavatel - školení 9</div>
<div class="t" style="letter-spacing:-0.005px;left:849.4px;top:544.80px;font-size:13.00px;line-height:13.00px;font-weight:400;color:#000;">12345678</div>
<div class="t" style="letter-spacing:-0.083px;left:949.3px;top:544.80px;font-size:13.00px;line-height:13.00px;font-weight:400;color:#000;">26. 5. 2025 18:57</div>
<div class="t" style="letter-spacing:-0.301px;left:1099.4px;top:544.80px;font-size:13.00px;line-height:13.00px;font-weight:400;color:#000;">Otevřeno</div>
<svg class="a" style="left:1340.5px;top:544.5px;" width="10" height="10" viewBox="0 0 10 10"><path d="M1 1 L9 9 M9 1 L1 9" stroke="#d42a2a" stroke-width="2.1"/></svg>
<svg class="a" style="left:1505.3px;top:544.5px;" width="12" height="10" viewBox="0 0 12 10"><path d="M1 5.6 L4.4 8.6 L11 1.2" fill="none" stroke="#2bb52b" stroke-width="2"/></svg>
<div class="a" style="left:345px;top:563px;width:1222px;height:1px;background:#dedede;"></div>
<svg class="a" style="left:356.5px;top:573.2px;" width="17" height="6" viewBox="0 0 17 6"><g fill="none" stroke="#1e75b4" stroke-width="1.2"><circle cx="2.4" cy="2.8" r="1.8"/><circle cx="8.3" cy="2.8" r="1.8"/><circle cx="14.2" cy="2.8" r="1.8"/></g></svg>
<svg class="a" style="left:383px;top:568px;" width="17" height="17" viewBox="0 0 17 17"><circle cx="8" cy="8" r="7.4" fill="none" stroke="#1e75b4" stroke-width="1.05"/>
<path d="M6.6 6.6 L7.4 7.2 V10.6 Q7.6 11.6 9 11.8" fill="none" stroke="#1e75b4" stroke-width="1.1" stroke-linecap="round" stroke-linejoin="round"/>
<path d="M7 4.3 L8.4 4.5" stroke="#1e75b4" stroke-width="1.3" stroke-linecap="round"/></svg>
<div class="t" style="letter-spacing:0.000px;left:419.5px;top:569.80px;font-size:13.00px;line-height:13.00px;font-weight:400;color:#000;">009</div>
<div class="t" style="letter-spacing:-0.154px;left:499.4px;top:569.80px;font-size:13.00px;line-height:13.00px;font-weight:400;color:#000;">Dodavatel - školení 4</div>
<div class="t" style="letter-spacing:-0.005px;left:849.4px;top:569.80px;font-size:13.00px;line-height:13.00px;font-weight:400;color:#000;">12345678</div>
<div class="t" style="letter-spacing:-0.083px;left:949.3px;top:569.80px;font-size:13.00px;line-height:13.00px;font-weight:400;color:#000;">26. 5. 2025 19:00</div>
<div class="t" style="letter-spacing:-0.284px;left:1099.4px;top:569.80px;font-size:13.00px;line-height:13.00px;font-weight:400;color:#000;">Podána po lhůtě</div>
<svg class="a" style="left:1340.5px;top:569.5px;" width="10" height="10" viewBox="0 0 10 10"><path d="M1 1 L9 9 M9 1 L1 9" stroke="#d42a2a" stroke-width="2.1"/></svg>
<svg class="a" style="left:1506.3px;top:569.5px;" width="10" height="10" viewBox="0 0 10 10"><path d="M1 1 L9 9 M9 1 L1 9" stroke="#d42a2a" stroke-width="2.1"/></svg>
<div class="a" style="left:345px;top:588px;width:1222px;height:1px;background:#dedede;"></div>
<svg class="a" style="left:356.5px;top:598.2px;" width="17" height="6" viewBox="0 0 17 6"><g fill="none" stroke="#1e75b4" stroke-width="1.2"><circle cx="2.4" cy="2.8" r="1.8"/><circle cx="8.3" cy="2.8" r="1.8"/><circle cx="14.2" cy="2.8" r="1.8"/></g></svg>
<svg class="a" style="left:383px;top:593px;" width="17" height="17" viewBox="0 0 17 17"><circle cx="8" cy="8" r="7.4" fill="none" stroke="#1e75b4" stroke-width="1.05"/>
<path d="M6.6 6.6 L7.4 7.2 V10.6 Q7.6 11.6 9 11.8" fill="none" stroke="#1e75b4" stroke-width="1.1" stroke-linecap="round" stroke-linejoin="round"/>
<path d="M7 4.3 L8.4 4.5" stroke="#1e75b4" stroke-width="1.3" stroke-linecap="round"/></svg>
<div class="t" style="letter-spacing:0.000px;left:419.5px;top:594.80px;font-size:13.00px;line-height:13.00px;font-weight:400;color:#000;">010</div>
<div class="t" style="letter-spacing:-0.154px;left:499.4px;top:594.80px;font-size:13.00px;line-height:13.00px;font-weight:400;color:#000;">Dodavatel - školení 6</div>
<div class="t" style="letter-spacing:-0.005px;left:849.4px;top:594.80px;font-size:13.00px;line-height:13.00px;font-weight:400;color:#000;">45359326</div>
<div class="t" style="letter-spacing:-0.083px;left:949.3px;top:594.80px;font-size:13.00px;line-height:13.00px;font-weight:400;color:#000;">26. 5. 2025 18:57</div>
<div class="t" style="letter-spacing:-0.301px;left:1099.4px;top:594.80px;font-size:13.00px;line-height:13.00px;font-weight:400;color:#000;">Otevřeno</div>
<svg class="a" style="left:1339.5px;top:594.5px;" width="12" height="10" viewBox="0 0 12 10"><path d="M1 5.6 L4.4 8.6 L11 1.2" fill="none" stroke="#2bb52b" stroke-width="2"/></svg>
<svg class="a" style="left:1506.3px;top:594.5px;" width="10" height="10" viewBox="0 0 10 10"><path d="M1 1 L9 9 M9 1 L1 9" stroke="#d42a2a" stroke-width="2.1"/></svg>
<div class="a" style="left:1490px;top:330px;width:77px;height:284px;background:linear-gradient(to right, rgba(0,0,0,0) 0%, rgba(0,0,0,0.015) 40%, rgba(0,0,0,0.08) 100%);"></div>
</div>
<div class="a" style="left:342px;top:288px;width:1228px;height:329px;border:3px solid #dcdde0;border-radius:10px;box-sizing:border-box;"></div>
<div class="a" style="left:327px;top:647px;width:1258px;height:501px;background:#fff;box-shadow:0 1px 4px rgba(0,0,0,0.13);"></div>
<div class="t" style="letter-spacing:-0.717px;left:339.4px;top:662.76px;font-size:18.00px;line-height:18.00px;font-weight:700;color:#2d2d2d;">Žádost o účast</div>
<div class="a" style="left:327px;top:688px;width:1258px;height:3px;background:#1e75b4;"></div>
<div class="t" style="letter-spacing:0.024px;right:1139px;top:713.20px;font-size:13.00px;line-height:13.00px;font-weight:400;color:#616161;">Lhůta:</div>
<div class="a" style="left:775px;top:711px;width:438px;height:21px;background:#f2f2f2;border:1px solid #cfcfcf;border-radius:4px;box-sizing:border-box;"></div>
<div class="t" style="letter-spacing:0.085px;left:779.8px;top:715.00px;font-size:13.00px;line-height:13.00px;font-weight:700;color:#000;">27. 5. 2025</div>
<svg class="a" style="left:987.5px;top:714.6px;" width="13" height="13" viewBox="0 0 13 13"><rect x="0.6" y="1.6" width="11.6" height="10.6" rx="1" fill="none" stroke="#999" stroke-width="1"/><path d="M0.6 4.6 H12.2 M3.4 0.2 V2.6 M9.4 0.2 V2.6" stroke="#999" stroke-width="1"/></svg>
<div class="t" style="letter-spacing:-0.170px;left:1008.2px;top:715.00px;font-size:13.00px;line-height:13.00px;font-weight:700;color:#000;">06:20</div>
<div class="t" style="letter-spacing:-0.217px;right:1139px;top:754.50px;font-size:13.00px;line-height:13.00px;font-weight:400;color:#616161;">Datum a čas otevírání:</div>
<div class="a" style="left:775px;top:752px;width:438px;height:21px;background:#f2f2f2;border:1px solid #cfcfcf;border-radius:4px;box-sizing:border-box;"></div>
<div class="t" style="letter-spacing:0.085px;left:779.8px;top:756.00px;font-size:13.00px;line-height:13.00px;font-weight:700;color:#000;">27. 5. 2025</div>
<svg class="a" style="left:987.5px;top:755.6px;" width="13" height="13" viewBox="0 0 13 13"><rect x="0.6" y="1.6" width="11.6" height="10.6" rx="1" fill="none" stroke="#999" stroke-width="1"/><path d="M0.6 4.6 H12.2 M3.4 0.2 V2.6 M9.4 0.2 V2.6" stroke="#999" stroke-width="1"/></svg>
<div class="t" style="letter-spacing:-0.170px;left:1008.2px;top:756.00px;font-size:13.00px;line-height:13.00px;font-weight:700;color:#000;">06:20</div>
<div class="a" style="left:775px;top:793px;width:438px;height:20.5px;background:#fff;border:1px solid #dadada;border-radius:5px;box-sizing:border-box;box-shadow:0 1px 2px rgba(0,0,0,0.10);"></div>
<div class="t" style="letter-spacing:-0.296px;left:994px;transform:translateX(-50%);top:797.80px;font-size:13.00px;line-height:13.00px;font-weight:400;color:#1e75b4;">Odeslání výzvy k podání žádosti o účast v ZŘ</div>
<div class="t" style="letter-spacing:-0.546px;left:774.8px;top:836.00px;font-size:13.00px;line-height:13.00px;font-weight:700;color:#e4141b;">Některý z dodavatelů podal více než jednu žádost o účast !</div>
<div class="t" style="letter-spacing:-0.189px;left:342.4px;top:872.80px;font-size:15.00px;line-height:15.00px;font-weight:700;color:#333;">Přehled podaných žádostí o účast</div>
<div class="a" style="left:342px;top:895px;width:1228px;height:233px;border:3px solid #dcdde0;border-radius:10px;box-sizing:border-box;background:#fff;"></div>
<div class="a" style="left:0;top:0;width:1567px;height:1153px;overflow:hidden;">
<svg class="a" style="left:352px;top:910px;" width="18" height="17" viewBox="0 0 18 17"><path d="M7.6 15.6 H1.1 V3.2 H4.9 Q5.1 0.6 7.7 0.6 Q10.3 0.6 10.5 3.2 H13.7 V5.6" fill="none" stroke="#1e75b4" stroke-width="1.1" stroke-linejoin="round"/>
<path d="M3.9 7 H7.2 M3.9 9.4 H6.4 M3.9 11.9 H5.6" stroke="#1e75b4" stroke-width="1.2"/>
<circle cx="7.7" cy="2.6" r="0.6" fill="#1e75b4"/>
<polygon points="12.70,6.20 11.20,8.30 8.63,8.55 9.70,10.90 8.63,13.25 11.20,13.50 12.70,15.60 14.20,13.50 16.77,13.25 15.70,10.90 16.77,8.55 14.20,8.30" fill="#fff" stroke="#1e75b4" stroke-width="1.1" stroke-linejoin="round"/>
<circle cx="12.7" cy="10.9" r="1.3" fill="#1e75b4"/></svg>
<div class="t" style="letter-spacing:-0.179px;left:373.3px;top:912.00px;font-size:13.00px;line-height:13.00px;font-weight:400;color:#1e75b4;">Evidovat žádost o účast</div>
<div class="a" style="left:514px;top:909px;width:1px;height:17.5px;background:#1e75b4;"></div>
<svg class="a" style="left:522.2px;top:910px;" width="18" height="17" viewBox="0 0 18 17"><path d="M7.6 15.6 H1.1 V3.2 H4.9 Q5.1 0.6 7.5 0.6 Q9.9 0.6 10.1 3.2 H13.8 V5.8" fill="none" stroke="#1e75b4" stroke-width="1.1" stroke-linejoin="round"/>
<path d="M3.9 7 H7.6 M3.9 9.4 H6.4 M3.9 11.9 H5.6" stroke="#1e75b4" stroke-width="1.2"/>
<circle cx="7.5" cy="2.6" r="0.6" fill="#1e75b4"/>
<circle cx="12.4" cy="11.5" r="4.2" fill="#fff" stroke="#1e75b4" stroke-width="1.1"/>
<path d="M10.2 11.5 H14.6 M12.8 9.7 L14.7 11.5 L12.8 13.3" fill="none" stroke="#1e75b4" stroke-width="1.1"/></svg>
<div class="t" style="letter-spacing:-0.132px;left:542.7px;top:912.00px;font-size:13.00px;line-height:13.00px;font-weight:400;color:#1e75b4;">Stáhnout žádosti o účast</div>
<div class="a" style="left:689px;top:909px;width:1px;height:17.5px;background:#1e75b4;"></div>
<svg class="a" style="left:698.0px;top:910.1px;" width="16" height="16" viewBox="0 0 16 16"><path d="M3.55 4.1 V1.6 Q3.55 0.55 4.6 0.55 H11 Q12.05 0.55 12.05 1.6 V4.1" fill="none" stroke="#1e75b4" stroke-width="1.1"/>
<path d="M3.55 11.8 H1.6 Q0.55 11.8 0.55 10.75 V5.15 Q0.55 4.1 1.6 4.1 H14 Q15.05 4.1 15.05 5.15 V10.75 Q15.05 11.8 14 11.8 H12.05" fill="none" stroke="#1e75b4" stroke-width="1.1"/>
<path d="M3.55 15.25 V8.3 H12.05 V15.25 Z" fill="none" stroke="#1e75b4" stroke-width="1.1" stroke-linejoin="round"/>
<path d="M5.3 10.4 H10.6 M5.3 12.5 H9.4 M2.3 6.4 H3.5" stroke="#1e75b4" stroke-width="1.05"/></svg>
<svg class="a" style="left:718.2px;top:915px;" width="8" height="7" viewBox="0 0 8 7"><path d="M0.6 0.5 H7.4 L4 5.9 Z" fill="none" stroke="#1e75b4" stroke-width="1.05" stroke-linejoin="round"/></svg>
<div class="a" style="left:737px;top:909px;width:1px;height:17.5px;background:#1e75b4;"></div>
<svg class="a" style="left:747.3px;top:910px;" width="15" height="17" viewBox="0 0 15 17"><path d="M4 6.2 H1.4 V15.6 H13 V6.2 H10.4" fill="none" stroke="#1e75b4" stroke-width="1.1" stroke-linejoin="round"/>
<path d="M7.2 0.8 V9.8 M4.4 3.6 L7.2 0.8 L10 3.6" fill="none" stroke="#1e75b4" stroke-width="1.1"/></svg>
<svg class="a" style="left:766px;top:915px;" width="8" height="7" viewBox="0 0 8 7"><path d="M0.6 0.5 H7.4 L4 5.9 Z" fill="none" stroke="#1e75b4" stroke-width="1.05" stroke-linejoin="round"/></svg>
<div class="a" style="left:785px;top:909px;width:1px;height:17.5px;background:#1e75b4;"></div>
<svg class="a" style="left:1485px;top:910px;" width="17" height="17" viewBox="0 0 17 17"><path d="M1.2 1.2 H15.6 V2.4 Q15.6 6 11 7.8 Q9.6 8.4 9.6 9.6 V14.2 Q9.6 15 8.8 15.6 L7.2 16.4 V9.6 Q7.2 8.4 5.8 7.8 Q1.2 6 1.2 2.4 Z" fill="none" stroke="#1e75b4" stroke-width="1.1" stroke-linejoin="round"/></svg>
<div class="a" style="left:1509px;top:909px;width:1px;height:17.5px;background:#1e75b4;"></div>
<svg class="a" style="left:1521.8px;top:915px;" width="8" height="7" viewBox="0 0 8 7"><path d="M0.6 0.5 H7.4 L4 5.9 Z" fill="none" stroke="#1e75b4" stroke-width="1.05" stroke-linejoin="round"/></svg>
<div class="t" style="letter-spacing:-0.555px;left:1537.5px;top:914.00px;font-size:13.00px;line-height:13.00px;font-weight:400;color:#1e75b4;">MW</div>
<div class="a" style="left:1566px;top:909px;width:1px;height:17.5px;background:#1e75b4;"></div>
<div class="a" style="left:345px;top:937px;width:1222px;height:37px;background:#f2f2f2;"></div>
<div class="a" style="left:345px;top:974px;width:1222px;height:1px;background:#d4d4d4;"></div>
<svg class="a" style="left:370px;top:948px;" width="17" height="17" viewBox="0 0 17 17"><rect x="0.5" y="0.5" width="15" height="15" rx="1" fill="none" stroke="#555" stroke-width="1"/>
<path d="M3.5 5.5 H12.5 M3.5 10.5 H12.5" stroke="#555" stroke-width="1"/>
<circle cx="10.8" cy="5.5" r="1.5" fill="#f2f2f2" stroke="#555" stroke-width="1"/>
<circle cx="6.9" cy="10.5" r="1.5" fill="#f2f2f2" stroke="#555" stroke-width="1"/></svg>
<div class="a" style="left:410px;top:937px;width:1px;height:37px;background:#d6d6d6;"></div>
<div class="a" style="left:490px;top:937px;width:1px;height:37px;background:#d6d6d6;"></div>
<div class="a" style="left:840px;top:937px;width:1px;height:37px;background:#d6d6d6;"></div>
<div class="a" style="left:940px;top:937px;width:1px;height:37px;background:#d6d6d6;"></div>
<div class="a" style="left:1090px;top:937px;width:1px;height:37px;background:#d6d6d6;"></div>
<div class="a" style="left:1240px;top:937px;width:1px;height:37px;background:#d6d6d6;"></div>
<div class="a" style="left:1380px;top:937px;width:1px;height:37px;background:#d6d6d6;"></div>
<div class="a" style="left:1520px;top:937px;width:1px;height:37px;background:#d6d6d6;"></div>
<div class="t" style="letter-spacing:-0.185px;left:419.3px;top:947.80px;font-size:13.00px;line-height:13.00px;font-weight:400;color:#666;">Číslo</div>
<svg class="a" style="left:473.2px;top:951px;" width="8" height="7" viewBox="0 0 8 7"><path d="M0.6 0.5 H7.4 L4 5.9 Z" fill="none" stroke="#666" stroke-width="1.05" stroke-linejoin="round"/></svg>
<div class="t" style="letter-spacing:-0.551px;left:499.5px;top:947.80px;font-size:13.00px;line-height:13.00px;font-weight:700;color:#000;">Název dodavatele</div>
<svg class="a" style="left:606px;top:948px;" width="13" height="13" viewBox="0 0 13 13"><path d="M6.4 12.4 V1.2 M1 6.4 L6.4 1 L11.8 6.4" fill="none" stroke="#111" stroke-width="1.2"/></svg>
<svg class="a" style="left:823.3px;top:951px;" width="8" height="7" viewBox="0 0 8 7"><path d="M0.6 0.5 H7.4 L4 5.9 Z" fill="none" stroke="#666" stroke-width="1.05" stroke-linejoin="round"/></svg>
<div class="t" style="letter-spacing:-1.042px;left:849.4px;top:947.80px;font-size:13.00px;line-height:13.00px;font-weight:400;color:#666;">IČO</div>
<svg class="a" style="left:923.4px;top:951px;" width="8" height="7" viewBox="0 0 8 7"><path d="M0.6 0.5 H7.4 L4 5.9 Z" fill="none" stroke="#666" stroke-width="1.05" stroke-linejoin="round"/></svg>
<div class="t" style="letter-spacing:-0.389px;left:949.3px;top:947.80px;font-size:13.00px;line-height:13.00px;font-weight:400;color:#666;">Datum podání</div>
<svg class="a" style="left:1073.4px;top:951px;" width="8" height="7" viewBox="0 0 8 7"><path d="M0.6 0.5 H7.4 L4 5.9 Z" fill="none" stroke="#666" stroke-width="1.05" stroke-linejoin="round"/></svg>
<div class="t" style="letter-spacing:-0.379px;left:1099.4px;top:947.80px;font-size:13.00px;line-height:13.00px;font-weight:400;color:#666;">Stav</div>
<svg class="a" style="left:1223.4px;top:951px;" width="8" height="7" viewBox="0 0 8 7"><path d="M0.6 0.5 H7.4 L4 5.9 Z" fill="none" stroke="#666" stroke-width="1.05" stroke-linejoin="round"/></svg>
<div class="t" style="letter-spacing:-0.253px;left:1249.4px;top:947.80px;font-size:13.00px;line-height:13.00px;font-weight:400;color:#666;">Podepsána</div>
<svg class="a" style="left:1363.4px;top:951px;" width="8" height="7" viewBox="0 0 8 7"><path d="M0.6 0.5 H7.4 L4 5.9 Z" fill="none" stroke="#666" stroke-width="1.05" stroke-linejoin="round"/></svg>
<div class="t" style="letter-spacing:-0.087px;left:1389.4px;top:947.80px;font-size:13.00px;line-height:13.00px;font-weight:400;color:#666;">Listinná podoba</div>
<svg class="a" style="left:1503.4px;top:951px;" width="8" height="7" viewBox="0 0 8 7"><path d="M0.6 0.5 H7.4 L4 5.9 Z" fill="none" stroke="#666" stroke-width="1.05" stroke-linejoin="round"/></svg>
<div class="t" style="letter-spacing:-0.325px;left:1529px;top:947.80px;font-size:13.00px;line-height:13.00px;font-weight:400;color:#666;">Označen jako nepodaný</div>
<div class="a" style="left:1089px;top:938.5px;width:151px;height:36px;border:1.6px solid #d7263d;box-sizing:border-box;"></div>
<svg class="a" style="left:356.5px;top:984.2px;" width="17" height="6" viewBox="0 0 17 6"><g fill="none" stroke="#1e75b4" stroke-width="1.2"><circle cx="2.4" cy="2.8" r="1.8"/><circle cx="8.3" cy="2.8" r="1.8"/><circle cx="14.2" cy="2.8" r="1.8"/></g></svg>
<svg class="a" style="left:383px;top:979px;" width="17" height="17" viewBox="0 0 17 17"><circle cx="8" cy="8" r="7.4" fill="none" stroke="#1e75b4" stroke-width="1.05"/>
<path d="M6.6 6.6 L7.4 7.2 V10.6 Q7.6 11.6 9 11.8" fill="none" stroke="#1e75b4" stroke-width="1.1" stroke-linecap="round" stroke-linejoin="round"/>
<path d="M7 4.3 L8.4 4.5" stroke="#1e75b4" stroke-width="1.3" stroke-linecap="round"/></svg>
<div class="t" style="letter-spacing:0.000px;left:419.5px;top:980.80px;font-size:13.00px;line-height:13.00px;font-weight:400;color:#000;">001</div>
<div class="t" style="letter-spacing:-0.154px;left:499.4px;top:980.80px;font-size:13.00px;line-height:13.00px;font-weight:400;color:#000;">Dodavatel - školení 2</div>
<div class="t" style="letter-spacing:-0.005px;left:849.4px;top:980.80px;font-size:13.00px;line-height:13.00px;font-weight:400;color:#000;">12345678</div>
<div class="t" style="letter-spacing:-0.082px;left:949.3px;top:980.80px;font-size:13.00px;line-height:13.00px;font-weight:400;color:#000;">27. 5. 2025 6:12</div>
<div class="t" style="letter-spacing:-0.301px;left:1099.4px;top:980.80px;font-size:13.00px;line-height:13.00px;font-weight:400;color:#000;">Otevřena</div>
<svg class="a" style="left:1306px;top:980.5px;" width="10" height="10" viewBox="0 0 10 10"><path d="M1 1 L9 9 M9 1 L1 9" stroke="#d42a2a" stroke-width="2.1"/></svg>
<svg class="a" style="left:1446px;top:980.5px;" width="10" height="10" viewBox="0 0 10 10"><path d="M1 1 L9 9 M9 1 L1 9" stroke="#d42a2a" stroke-width="2.1"/></svg>
<div class="a" style="left:345px;top:999px;width:1222px;height:1px;background:#dedede;"></div>
<svg class="a" style="left:356.5px;top:1009.2px;" width="17" height="6" viewBox="0 0 17 6"><g fill="none" stroke="#1e75b4" stroke-width="1.2"><circle cx="2.4" cy="2.8" r="1.8"/><circle cx="8.3" cy="2.8" r="1.8"/><circle cx="14.2" cy="2.8" r="1.8"/></g></svg>
<svg class="a" style="left:383px;top:1004px;" width="17" height="17" viewBox="0 0 17 17"><circle cx="8" cy="8" r="7.4" fill="none" stroke="#1e75b4" stroke-width="1.05"/>
<path d="M6.6 6.6 L7.4 7.2 V10.6 Q7.6 11.6 9 11.8" fill="none" stroke="#1e75b4" stroke-width="1.1" stroke-linecap="round" stroke-linejoin="round"/>
<path d="M7 4.3 L8.4 4.5" stroke="#1e75b4" stroke-width="1.3" stroke-linecap="round"/></svg>
<div class="t" style="letter-spacing:0.000px;left:419.5px;top:1005.80px;font-size:13.00px;line-height:13.00px;font-weight:400;color:#000;">002</div>
<div class="t" style="letter-spacing:-0.154px;left:499.4px;top:1005.80px;font-size:13.00px;line-height:13.00px;font-weight:400;color:#000;">Dodavatel - školení 3</div>
<div class="t" style="letter-spacing:-0.005px;left:849.4px;top:1005.80px;font-size:13.00px;line-height:13.00px;font-weight:400;color:#000;">12345678</div>
<div class="t" style="letter-spacing:-0.082px;left:949.3px;top:1005.80px;font-size:13.00px;line-height:13.00px;font-weight:400;color:#000;">27. 5. 2025 6:13</div>
<div class="t" style="letter-spacing:-0.301px;left:1099.4px;top:1005.80px;font-size:13.00px;line-height:13.00px;font-weight:400;color:#000;">Otevřena</div>
<svg class="a" style="left:1306px;top:1005.5px;" width="10" height="10" viewBox="0 0 10 10"><path d="M1 1 L9 9 M9 1 L1 9" stroke="#d42a2a" stroke-width="2.1"/></svg>
<svg class="a" style="left:1446px;top:1005.5px;" width="10" height="10" viewBox="0 0 10 10"><path d="M1 1 L9 9 M9 1 L1 9" stroke="#d42a2a" stroke-width="2.1"/></svg>
<div class="a" style="left:345px;top:1024px;width:1222px;height:1px;background:#dedede;"></div>
<svg class="a" style="left:356.5px;top:1034.2px;" width="17" height="6" viewBox="0 0 17 6"><g fill="none" stroke="#1e75b4" stroke-width="1.2"><circle cx="2.4" cy="2.8" r="1.8"/><circle cx="8.3" cy="2.8" r="1.8"/><circle cx="14.2" cy="2.8" r="1.8"/></g></svg>
<svg class="a" style="left:383px;top:1029px;" width="17" height="17" viewBox="0 0 17 17"><circle cx="8" cy="8" r="7.4" fill="none" stroke="#1e75b4" stroke-width="1.05"/>
<path d="M6.6 6.6 L7.4 7.2 V10.6 Q7.6 11.6 9 11.8" fill="none" stroke="#1e75b4" stroke-width="1.1" stroke-linecap="round" stroke-linejoin="round"/>
<path d="M7 4.3 L8.4 4.5" stroke="#1e75b4" stroke-width="1.3" stroke-linecap="round"/></svg>
<div class="t" style="letter-spacing:0.000px;left:419.5px;top:1030.80px;font-size:13.00px;line-height:13.00px;font-weight:400;color:#000;">004</div>
<div class="t" style="letter-spacing:-0.154px;left:499.4px;top:1030.80px;font-size:13.00px;line-height:13.00px;font-weight:400;color:#000;">Dodavatel - školení 5</div>
<div class="t" style="letter-spacing:-0.005px;left:849.4px;top:1030.80px;font-size:13.00px;line-height:13.00px;font-weight:400;color:#000;">12345678</div>
<div class="t" style="letter-spacing:-0.082px;left:949.3px;top:1030.80px;font-size:13.00px;line-height:13.00px;font-weight:400;color:#000;">27. 5. 2025 6:15</div>
<div class="t" style="letter-spacing:-0.301px;left:1099.4px;top:1030.80px;font-size:13.00px;line-height:13.00px;font-weight:400;color:#000;">Otevřena</div>
<svg class="a" style="left:1306px;top:1030.5px;" width="10" height="10" viewBox="0 0 10 10"><path d="M1 1 L9 9 M9 1 L1 9" stroke="#d42a2a" stroke-width="2.1"/></svg>
<svg class="a" style="left:1446px;top:1030.5px;" width="10" height="10" viewBox="0 0 10 10"><path d="M1 1 L9 9 M9 1 L1 9" stroke="#d42a2a" stroke-width="2.1"/></svg>
<div class="a" style="left:345px;top:1049px;width:1222px;height:1px;background:#dedede;"></div>
<svg class="a" style="left:356.5px;top:1059.2px;" width="17" height="6" viewBox="0 0 17 6"><g fill="none" stroke="#1e75b4" stroke-width="1.2"><circle cx="2.4" cy="2.8" r="1.8"/><circle cx="8.3" cy="2.8" r="1.8"/><circle cx="14.2" cy="2.8" r="1.8"/></g></svg>
<svg class="a" style="left:383px;top:1054px;" width="17" height="17" viewBox="0 0 17 17"><circle cx="8" cy="8" r="7.4" fill="none" stroke="#1e75b4" stroke-width="1.05"/>
<path d="M6.6 6.6 L7.4 7.2 V10.6 Q7.6 11.6 9 11.8" fill="none" stroke="#1e75b4" stroke-width="1.1" stroke-linecap="round" stroke-linejoin="round"/>
<path d="M7 4.3 L8.4 4.5" stroke="#1e75b4" stroke-width="1.3" stroke-linecap="round"/></svg>
<div class="t" style="letter-spacing:0.000px;left:419.5px;top:1055.80px;font-size:13.00px;line-height:13.00px;font-weight:400;color:#000;">003</div>
<div class="t" style="letter-spacing:-0.154px;left:499.4px;top:1055.80px;font-size:13.00px;line-height:13.00px;font-weight:400;color:#000;">Dodavatel - školení 6</div>
<div class="t" style="letter-spacing:-0.005px;left:849.4px;top:1055.80px;font-size:13.00px;line-height:13.00px;font-weight:400;color:#000;">45359326</div>
<div class="t" style="letter-spacing:-0.082px;left:949.3px;top:1055.80px;font-size:13.00px;line-height:13.00px;font-weight:400;color:#000;">27. 5. 2025 6:14</div>
<div class="t" style="letter-spacing:-0.301px;left:1099.4px;top:1055.80px;font-size:13.00px;line-height:13.00px;font-weight:400;color:#000;">Otevřena</div>
<svg class="a" style="left:1306px;top:1055.5px;" width="10" height="10" viewBox="0 0 10 10"><path d="M1 1 L9 9 M9 1 L1 9" stroke="#d42a2a" stroke-width="2.1"/></svg>
<svg class="a" style="left:1446px;top:1055.5px;" width="10" height="10" viewBox="0 0 10 10"><path d="M1 1 L9 9 M9 1 L1 9" stroke="#d42a2a" stroke-width="2.1"/></svg>
<div class="a" style="left:345px;top:1074px;width:1222px;height:1px;background:#dedede;"></div>
<svg class="a" style="left:356.5px;top:1084.2px;" width="17" height="6" viewBox="0 0 17 6"><g fill="none" stroke="#1e75b4" stroke-width="1.2"><circle cx="2.4" cy="2.8" r="1.8"/><circle cx="8.3" cy="2.8" r="1.8"/><circle cx="14.2" cy="2.8" r="1.8"/></g></svg>
<svg class="a" style="left:383px;top:1079px;" width="17" height="17" viewBox="0 0 17 17"><circle cx="8" cy="8" r="7.4" fill="none" stroke="#1e75b4" stroke-width="1.05"/>
<path d="M6.6 6.6 L7.4 7.2 V10.6 Q7.6 11.6 9 11.8" fill="none" stroke="#1e75b4" stroke-width="1.1" stroke-linecap="round" stroke-linejoin="round"/>
<path d="M7 4.3 L8.4 4.5" stroke="#1e75b4" stroke-width="1.3" stroke-linecap="round"/></svg>
<div class="t" style="letter-spacing:0.000px;left:419.5px;top:1080.80px;font-size:13.00px;line-height:13.00px;font-weight:400;color:#000;">005</div>
<div class="t" style="letter-spacing:-0.154px;left:499.4px;top:1080.80px;font-size:13.00px;line-height:13.00px;font-weight:400;color:#000;">Dodavatel - školení 8</div>
<div class="t" style="letter-spacing:-0.005px;left:849.4px;top:1080.80px;font-size:13.00px;line-height:13.00px;font-weight:400;color:#000;">12345678</div>
<div class="t" style="letter-spacing:-0.082px;left:949.3px;top:1080.80px;font-size:13.00px;line-height:13.00px;font-weight:400;color:#000;">27. 5. 2025 6:16</div>
<div class="t" style="letter-spacing:-0.301px;left:1099.4px;top:1080.80px;font-size:13.00px;line-height:13.00px;font-weight:400;color:#000;">Otevřena</div>
<svg class="a" style="left:1306px;top:1080.5px;" width="10" height="10" viewBox="0 0 10 10"><path d="M1 1 L9 9 M9 1 L1 9" stroke="#d42a2a" stroke-width="2.1"/></svg>
<svg class="a" style="left:1446px;top:1080.5px;" width="10" height="10" viewBox="0 0 10 10"><path d="M1 1 L9 9 M9 1 L1 9" stroke="#d42a2a" stroke-width="2.1"/></svg>
<div class="a" style="left:345px;top:1099px;width:1222px;height:1px;background:#dedede;"></div>
<svg class="a" style="left:356.5px;top:1109.2px;" width="17" height="6" viewBox="0 0 17 6"><g fill="none" stroke="#1e75b4" stroke-width="1.2"><circle cx="2.4" cy="2.8" r="1.8"/><circle cx="8.3" cy="2.8" r="1.8"/><circle cx="14.2" cy="2.8" r="1.8"/></g></svg>
<svg class="a" style="left:383px;top:1104px;" width="17" height="17" viewBox="0 0 17 17"><circle cx="8" cy="8" r="7.4" fill="none" stroke="#1e75b4" stroke-width="1.05"/>
<path d="M6.6 6.6 L7.4 7.2 V10.6 Q7.6 11.6 9 11.8" fill="none" stroke="#1e75b4" stroke-width="1.1" stroke-linecap="round" stroke-linejoin="round"/>
<path d="M7 4.3 L8.4 4.5" stroke="#1e75b4" stroke-width="1.3" stroke-linecap="round"/></svg>
<div class="t" style="letter-spacing:0.000px;left:419.5px;top:1105.80px;font-size:13.00px;line-height:13.00px;font-weight:400;color:#000;">006</div>
<div class="t" style="letter-spacing:-0.154px;left:499.4px;top:1105.80px;font-size:13.00px;line-height:13.00px;font-weight:400;color:#000;">Dodavatel - školení 8</div>
<div class="t" style="letter-spacing:-0.005px;left:849.4px;top:1105.80px;font-size:13.00px;line-height:13.00px;font-weight:400;color:#000;">12345678</div>
<div class="t" style="letter-spacing:-0.082px;left:949.3px;top:1105.80px;font-size:13.00px;line-height:13.00px;font-weight:400;color:#000;">27. 5. 2025 6:19</div>
<div class="t" style="letter-spacing:-0.275px;left:1099.4px;top:1105.80px;font-size:13.00px;line-height:13.00px;font-weight:400;color:#000;">Otevírání zahájeno</div>
<svg class="a" style="left:1306px;top:1105.5px;" width="10" height="10" viewBox="0 0 10 10"><path d="M1 1 L9 9 M9 1 L1 9" stroke="#d42a2a" stroke-width="2.1"/></svg>
<svg class="a" style="left:1445px;top:1105.5px;" width="12" height="10" viewBox="0 0 12 10"><path d="M1 5.6 L4.4 8.6 L11 1.2" fill="none" stroke="#2bb52b" stroke-width="2"/></svg>
<div class="a" style="left:1490px;top:937px;width:77px;height:188px;background:linear-gradient(to right, rgba(0,0,0,0) 0%, rgba(0,0,0,0.015) 40%, rgba(0,0,0,0.08) 100%);"></div>
</div>
<div class="a" style="left:342px;top:895px;width:1228px;height:233px;border:3px solid #dcdde0;border-radius:10px;box-sizing:border-box;"></div>
</body></html>
